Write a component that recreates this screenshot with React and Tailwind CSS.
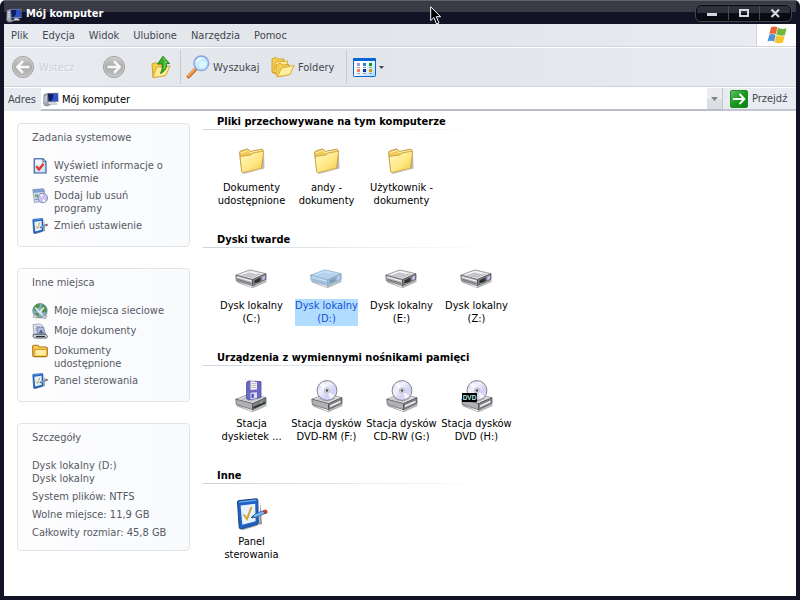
import React from "react";

const font = "font-['DejaVu_Sans_Condensed','DejaVu_Sans',sans-serif]";

/* ---------- icons ---------- */

function ComputerIcon({ className = "h-4 w-4" }) {
  return (
    <svg viewBox="0 0 16 16" className={className} aria-hidden="true">
      <path d="M1 3.5 L4.5 2.5 L5.2 3.5 V14 L2 15 L.6 13Z" fill="#a9afb9" stroke="#6b727f" strokeWidth=".6" />
      <path d="M1.6 6 L3.8 5.4 M1.6 8 L3.8 7.5 M1.6 10 L3.8 9.6" stroke="#e8eaee" strokeWidth=".8" />
      <path d="M4 2 L15.3 1.8 L15.6 11 L4.6 11.2Z" fill="#8089a0" />
      <path d="M5 2.8 L14.5 2.7 L14.8 10 L5.5 10.2Z" fill="#101d63" />
      <path d="M10 2.8 L14.5 2.7 L14.8 10 L8 10 Q11 7 10 2.8Z" fill="#2d54c8" />
      <path d="M8.5 11.2 H12 L14 13.2 L7.5 13.4Z" fill="#dfe2e8" stroke="#8d93a0" strokeWidth=".5" />
      <path d="M2 14 L6.5 12.6 L8 14 L4 15.4Z" fill="#8e96a4" />
    </svg>
  );
}

function RoundArrow({ flip = false }) {
  return (
    <svg viewBox="0 0 24 24" className="h-6 w-6" aria-hidden="true">
      <defs>
        <linearGradient id={flip ? "rgF" : "rgB"} x1="0" y1="0" x2="0" y2="1">
          <stop offset="0" stopColor="#cdcdcd" />
          <stop offset=".5" stopColor="#ababab" />
          <stop offset="1" stopColor="#c2c2c2" />
        </linearGradient>
      </defs>
      <circle cx="12" cy="12" r="10.6" fill={flip ? "url(#rgF)" : "url(#rgB)"} stroke="#9d9d9d" strokeWidth=".9" />
      <circle cx="12" cy="12" r="9.6" fill="none" stroke="#d0d0d0" strokeWidth=".7" />
      <g transform={flip ? "rotate(180 12 12)" : undefined} stroke="#f8f8f8" strokeWidth="2.5" fill="none">
        <path d="M18.5 12 H7" />
        <path d="M12 6.2 L6.3 12 L12 17.8" />
      </g>
    </svg>
  );
}

function UpIcon() {
  return (
    <svg viewBox="0 0 22 24" className="h-6 w-[22px]" aria-hidden="true">
      <path d="M2 9 L6 7.5 L8 9 L14 8 V20 L3 22.5Z" fill="#f6cf4e" stroke="#c99a1d" strokeWidth=".9" />
      <path d="M3 22.5 L6.5 12 L20 11 L15.5 20.8Z" fill="#ffeb92" stroke="#d3a226" strokeWidth=".9" />
      <path d="M13 1.3 L19.5 8.5 H16.5 Q17.2 15.5 10.5 18.5 Q12.8 14.5 12.2 9 H7.5Z" fill="#3cad29" stroke="#1d7d12" strokeWidth=".9" />
      <path d="M13 3 L16.5 7.4 H15 Q15.3 11 14 14" fill="none" stroke="#8be06f" strokeWidth=".9" />
    </svg>
  );
}

function SearchIcon() {
  return (
    <svg viewBox="0 0 24 24" className="h-6 w-6" aria-hidden="true">
      <path d="M2.5 21.5 L9.5 14.3" stroke="#c5692a" strokeWidth="3.8" strokeLinecap="round" />
      <path d="M2.3 21 L9 14" stroke="#f7a45c" strokeWidth="2" strokeLinecap="round" />
      <circle cx="15.3" cy="8.3" r="7.3" fill="#c3e9fd" stroke="#8aa6e2" strokeWidth="1.5" />
      <path d="M10 8 A5.5 5.5 0 0 1 17 3 Q13 5 10 8Z" fill="#fff" />
      <circle cx="16.5" cy="9.5" r="3.6" fill="#e4f7ff" opacity=".8" />
    </svg>
  );
}

function FoldersIcon() {
  return (
    <svg viewBox="0 0 24 22" className="h-[22px] w-6" aria-hidden="true">
      <path d="M1 3 L5 1.2 L7 3 L13 3 V14 L2.5 17.5 L1 16Z" fill="#f5cf50" stroke="#d29c22" strokeWidth=".9" />
      <path d="M2.5 17 L4.5 6 L17 5 L14 14.5Z" fill="#ffeb9a" stroke="#d29c22" strokeWidth=".8" />
      <path d="M5 9 L9 7.2 L11.5 9 L18 8.5 V18.5 L6.5 20.8 L5 19Z" fill="#f5cf50" stroke="#d29c22" strokeWidth=".9" />
      <path d="M6.5 20.8 L10.5 12 L23 9.5 L19 18.5Z" fill="#fff0a0" stroke="#d8a52b" strokeWidth=".9" />
    </svg>
  );
}

function ViewsIcon() {
  const cells = [
    [5, 5, "#a49bd6"], [11, 5, "#1686ea"], [17, 5, "#0a9c12"],
    [5, 11, "#ff7a4a"], [11, 11, "#08359a"], [17, 11, "#d19a08"],
  ];
  return (
    <svg viewBox="0 0 23 19" className="h-[19px] w-[23px]" aria-hidden="true">
      <defs>
        <linearGradient id="vw" x1="0" y1="0" x2="1" y2="1">
          <stop offset=".4" stopColor="#fff" />
          <stop offset="1" stopColor="#a9d6fb" />
        </linearGradient>
      </defs>
      <rect x=".5" y=".5" width="22" height="18" rx="1" fill="url(#vw)" stroke="#0667cf" />
      <rect x="0" y="0" width="23" height="3" rx="1" fill="#0667d2" />
      {cells.map(([x, y, c]) => (
        <g key={c}>
          <rect x={x - 1} y={y} width="3" height="3" fill={c} />
          <rect x={x - 1} y={y + 4} width="3" height="1" fill="#9aa0a8" />
        </g>
      ))}
    </svg>
  );
}

function GoIcon() {
  return (
    <svg viewBox="0 0 18 18" className="h-[18px] w-[18px]" aria-hidden="true">
      <defs>
        <linearGradient id="go" x1="0" y1="0" x2="1" y2="1">
          <stop offset="0" stopColor="#6cc06c" />
          <stop offset=".5" stopColor="#179a1d" />
          <stop offset="1" stopColor="#0a7d10" />
        </linearGradient>
      </defs>
      <rect x=".5" y=".5" width="17" height="17" rx="1.5" fill="url(#go)" stroke="#1d8a24" />
      <path d="M3 9 H14 M9.5 4 L14.5 9 L9.5 14" stroke="#fff" strokeWidth="1.8" fill="none" />
    </svg>
  );
}

function WindowsLogo() {
  return (
    <svg viewBox="0 0 20 18" className="h-[18px] w-5" aria-hidden="true">
      <path d="M4 1.3 Q7 -.3 10.4 1.3 L8.8 8.3 Q5.8 6.6 2.4 8.2Z" fill="#f0643a" />
      <path d="M10.9 1.8 Q14.5 3.8 19.6 2.2 L17.9 9.1 Q13.5 10.4 9.3 8.6Z" fill="#6fb83a" />
      <path d="M2.2 8.9 Q5.5 7.2 8.6 9 L7 15.7 Q4 14 .5 15.7Z" fill="#4f93dd" />
      <path d="M9.1 9.3 Q13.4 11.2 17.7 9.8 L15.9 16.6 Q11.8 18.1 7.5 16.3Z" fill="#f6c62c" />
    </svg>
  );
}

function FolderIcon() {
  return (
    <svg viewBox="0 0 32 32" className="h-8 w-8" aria-hidden="true">
      <defs>
        <linearGradient id="fo" x1="0" y1="0" x2="1" y2="1">
          <stop offset="0" stopColor="#fffac6" />
          <stop offset=".6" stopColor="#ffe680" />
          <stop offset="1" stopColor="#f0c443" />
        </linearGradient>
      </defs>
      <path d="M6 29 L25 25 L28 8 L28.5 24.5 L8 30Z" fill="#777" opacity=".5" />
      <path d="M3.5 8.5 Q3.5 7.5 4.5 7.2 L11 5 Q12 4.8 12.6 5.6 L14.3 7.4 L25.5 5.2 Q27 5 27 6.3 L25.5 23 L6 27.8Z" fill="#f0c958" stroke="#b98a2a" strokeWidth=".8" />
      <path d="M4.8 9 L11.8 6.4 L14 8.6 L26 6.4" stroke="#fff3b5" strokeWidth="1" fill="none" />
      <path d="M4 12.5 L14.5 11 L17 9 L27 7.2 Q27.8 7.2 27.6 8.2 L25.5 24.3 L6.7 28.5 Q5.9 28.5 5.7 27.8Z" fill="url(#fo)" stroke="#c79b38" strokeWidth=".8" />
    </svg>
  );
}

function DriveBase({ y = 0 }) {
  return (
    <g transform={`translate(0 ${y})`}>
      <path d="M1 18 L16 25 L31.5 18 L31.5 20 L17.5 26.3 L2 20.5Z" fill="#444" opacity=".4" />
      <path d="M.8 13.2 L14 8.2 Q15 7.9 16 8.2 L31 11.7 L17.5 17.5Z" fill="#ededef" stroke="#77777c" strokeWidth=".7" />
      <path d="M4 13.2 L14 9.6 L27 12.3 L17 16Z" fill="#c6c6ca" />
      <path d="M.8 13.2 L17.5 17.5 V23.8 L1.3 18.3Z" fill="#b1b1b5" stroke="#58585d" strokeWidth=".7" />
      <path d="M17.5 17.5 L31 11.7 V17.5 L17.5 23.8Z" fill="#808086" stroke="#47474d" strokeWidth=".7" />
    </g>
  );
}

function DiskIcon({ selected = false }) {
  return (
    <svg viewBox="0 0 32 32" className={selected ? "h-8 w-8 opacity-90" : "h-8 w-8"} aria-hidden="true">
      <DriveBase />
      <path d="M6 12.6 L14.5 9.8 L22 11.6" stroke="#fff" strokeWidth="1" fill="none" />
      <path d="M2 15 L16.5 19.2" stroke="#f3f3f5" strokeWidth="1.2" />
      <path d="M2.5 17.3 L16 21.6" stroke="#6c6c72" strokeWidth="1" />
      <path d="M19.5 18.3 L25.5 15.6 V19 L19.5 21.8Z" fill="#2f2f35" />
      <path d="M27.3 14.7 L30 13.5 V17 L27.3 18.3Z" fill="#c4c0f6" />
      <rect x="20" y="21" width="2" height="1" fill="#5fca5f" />
      {selected && (
        <path
          d="M.5 13.2 L14 7.8 Q15 7.5 16 7.8 L31.4 11.4 V18 L17.5 24.5 L1 18.8Z"
          fill="#9cd0fb"
          opacity=".62"
        />
      )}
    </svg>
  );
}

function FloppyDriveIcon() {
  return (
    <svg viewBox="0 0 32 32" className="h-8 w-8" aria-hidden="true">
      <DriveBase y={6} />
      <path d="M18.5 27 L30 21.7 V23.2 L18.5 28.5Z" fill="#1d1d1f" />
      <rect x="25.5" y="22" width="2" height="1.4" fill="#6fd35b" />
      <path d="M11.5 2.5 L13 1 L26 1.5 V17.5 L13.5 20 L11.5 18.5Z" fill="#6a68c4" stroke="#45439a" strokeWidth=".7" />
      <path d="M15.5 1.3 L22 1.5 V9.5 L15.5 10Z" fill="#f1f1ec" />
      <path d="M16.3 3.5 H21.3 M16.3 5.5 H21.3 M16.3 7.5 H21.3" stroke="#b7b7b7" strokeWidth=".8" />
      <path d="M15.5 12.8 L22 12.2 V18 L15.5 19.4Z" fill="#dcdcf0" />
      <path d="M16.5 14 L18.8 13.8 V17.7 L16.5 18.2Z" fill="#5250ae" />
    </svg>
  );
}

function DiscDriveIcon({ dvd = false }) {
  return (
    <svg viewBox="0 0 32 32" className="h-8 w-8" aria-hidden="true">
      <defs>
        <linearGradient id={dvd ? "dd" : "cd"} x1="0" y1="0" x2="1" y2="1">
          <stop offset="0" stopColor="#c8c4f6" />
          <stop offset=".35" stopColor="#f3f2fd" />
          <stop offset=".65" stopColor="#d2d0f6" />
          <stop offset="1" stopColor="#ecebfa" />
        </linearGradient>
      </defs>
      <DriveBase y={6} />
      <path d="M19 25.3 L29.5 20.6 V22.4 L19 27.2Z" fill="#ececee" />
      <circle cx="16" cy="10.5" r="9.9" fill={dvd ? "url(#dd)" : "url(#cd)"} stroke="#77777f" strokeWidth=".9" />
      <path d="M16 10.5 L8.5 5 A9 9 0 0 1 12.5 2.2Z M16 10.5 L23.5 16 A9 9 0 0 1 19.5 18.8Z" fill="#fff" opacity=".75" />
      <circle cx="16" cy="10.5" r="2.7" fill="#e6e6ea" stroke="#9d9dad" strokeWidth=".6" />
      <circle cx="16" cy="10.5" r="1.3" fill="#4a4a54" />
      {dvd && (
        <g>
          <rect x="1" y="13" width="15" height="9" fill="#000" />
          <text x="8.5" y="20" textAnchor="middle" fontSize="6.5" fontWeight="bold" fill="#b9eeee" fontFamily="Liberation Sans, sans-serif">
            DVD
          </text>
        </g>
      )}
    </svg>
  );
}

function PanelIcon({ className = "h-8 w-8" }) {
  return (
    <svg viewBox="0 0 32 32" className={className} aria-hidden="true">
      <path d="M4 31 L23 26.5 L24.5 4 L26 26 L7 32Z" fill="#444" opacity=".55" />
      <path d="M1.5 4 Q1.5 2.8 2.7 2.6 L20 .8 Q21.8 .7 21.8 2 L22.3 25 Q22.3 26.2 21 26.5 L5 30.8 Q3.3 31 3.2 29.5Z" fill="#1d62c4" stroke="#164488" strokeWidth="1" />
      <path d="M2.8 4.2 L20.5 2.2" stroke="#6aa8ee" strokeWidth="1.3" />
      <path d="M4.6 7.5 L19.2 5.7 L19.6 23.3 L6.3 26.8Z" fill="#e6f3ff" />
      <path d="M7.5 16.5 L11 21 L15.5 9" fill="none" stroke="#d9a32c" strokeWidth="2" />
      <path d="M15.5 19.8 L19 16 L27.5 12.7 L29.5 15.2 L20 19.3Z" fill="#7ab8f2" stroke="#2a63ae" strokeWidth=".9" />
      <path d="M27.3 12.8 L30 11.8 Q32 13 31 15 L29 15.7Z" fill="#d84432" stroke="#8c2416" strokeWidth=".6" />
      <path d="M15 20 L18 19 L16.8 17.5Z" fill="#333" />
    </svg>
  );
}

function SysInfoIcon() {
  return (
    <svg viewBox="0 0 16 16" className="h-4 w-4" aria-hidden="true">
      <path d="M2.2 .8 H11 L14 3.8 V15 H2.2Z" fill="#cfe3fb" stroke="#31568f" strokeWidth="1.1" />
      <path d="M3.2 2 H9.5 V7 H3.2Z" fill="#f0f6fe" />
      <path d="M11 .8 V3.8 H14Z" fill="#fff" stroke="#31568f" strokeWidth=".8" />
      <path d="M4.3 8.3 L7 11.5 L11.5 5.8" fill="none" stroke="#e8331f" strokeWidth="2.2" />
    </svg>
  );
}

function AddRemoveIcon() {
  return (
    <svg viewBox="0 0 16 16" className="h-4 w-4" aria-hidden="true">
      <path d="M.8 1.5 L11.5 .8 L12.5 3 V13 L2.5 14.5Z" fill="#d5dfed" stroke="#8391ad" strokeWidth=".8" />
      <path d="M.8 1.5 L11.5 .8 L12 4 L1.3 5Z" fill="#7f9bd2" />
      <rect x="3" y="6.3" width="3" height="3" fill="#6fb55f" />
      <path d="M3 11.5 H7 M7.5 7.5 H10" stroke="#7d8aa8" strokeWidth=".9" />
      <circle cx="10.8" cy="10" r="4.7" fill="#cdc8f3" stroke="#7c79b0" strokeWidth=".9" />
      <path d="M10.8 10 L8 7 A4 4 0 0 1 10.5 6Z M10.8 10 L13.5 13 A4 4 0 0 1 11 14Z" fill="#fff" />
      <circle cx="10.8" cy="10" r="1.2" fill="#fff" stroke="#7c79b0" strokeWidth=".5" />
    </svg>
  );
}

function NetworkIcon() {
  return (
    <svg viewBox="0 0 16 16" className="h-4 w-4" aria-hidden="true">
      <circle cx="8" cy="7.7" r="7.2" fill="#86aec4" stroke="#587f8a" strokeWidth=".8" />
      <path d="M2 4 Q5 0 8 1.2 Q8 4 5.5 5 Q5 8 3 8 Q1.5 7 2 4Z M10 1.5 Q15 3.5 14.8 8 Q12.5 11 10.5 8.5 Q9 5 10 1.5Z M3 10 Q6 9 7 12 L6.5 14 Q3.5 13 3 10Z" fill="#4a933c" />
      <path d="M3 4.5 L12 13.5 M7 10 L12 4.5" stroke="#e9eef1" strokeWidth="1.6" />
      <path d="M11.5 11.5 L15 13 L13.5 15.5 L9.5 14.7Z" fill="#c6ccd4" stroke="#626b77" strokeWidth=".5" />
      <path d="M2 11.5 L6 13 L4.5 15.3 L1 14Z" fill="#cdd3da" stroke="#7c8590" strokeWidth=".5" />
    </svg>
  );
}

function DocsIcon() {
  return (
    <svg viewBox="0 0 16 16" className="h-4 w-4" aria-hidden="true">
      <path d="M1 1.5 L8.5 1 L10.5 3 V11 H2Z" fill="#e6e8f3" stroke="#8d93ae" strokeWidth=".8" />
      <path d="M3 3.5 H8 M3 5.5 H8 M3 7.5 H6" stroke="#99a0bd" strokeWidth=".8" />
      <path d="M5 4.5 L11.5 4 L13.5 11.5 H5.5Z" fill="#aeb9dc" stroke="#65709a" strokeWidth=".7" />
      <path d="M6.5 10.3 L9 6.5 L12 10.5Z" fill="#52608c" />
      <path d="M1.5 11.3 H14 L15.5 13.5 L14.5 15 H2.5 L.8 13.2Z" fill="#d3d5dd" stroke="#4a4e5e" strokeWidth=".9" />
      <path d="M4 13.5 H13" stroke="#2b2f3f" strokeWidth="1.2" />
    </svg>
  );
}

function SmallFolderIcon() {
  return (
    <svg viewBox="0 0 16 16" className="h-4 w-4" aria-hidden="true">
      <path d="M.7 3.5 Q.7 2.2 2 2.2 H5.5 L7.2 4 H14 Q15.3 4 15.3 5.3 V12 Q15.3 13.6 13.8 13.6 H2.2 Q.7 13.6 .7 12Z" fill="#f7cd55" stroke="#ad7410" strokeWidth="1.1" />
      <path d="M3.2 6.8 H13.8 V12.3 H2.5Z" fill="#ffefa0" />
      <path d="M2.8 12.5 V6.5 H14.2" stroke="#c48a1b" strokeWidth=".8" fill="none" />
    </svg>
  );
}

/* ---------- pieces ---------- */

function TitleBar() {
  const buttons = [
    ["Minimalizuj", <path key="m" d="M10 8.5 H20" stroke="#d5d6de" strokeWidth="3" />],
    ["Maksymalizuj", <rect key="x" x="11" y="4" width="8" height="6" fill="none" stroke="#d5d6de" strokeWidth="2" />],
    ["Zamknij", <path key="c" d="M11.5 3.5 L19 11 M19 3.5 L11.5 11" stroke="#d5d6de" strokeWidth="2.2" />],
  ];
  return (
    <header className="flex h-6 shrink-0 items-center border-t border-[#60616c] bg-[linear-gradient(#3b3b47_0_11px,#121325_11px)] pl-[2px] pr-[5px]">
      <ComputerIcon className="mr-1 mt-1 h-4 w-4" />
      <h1 className="mt-[3px] flex-1 text-[11px] font-bold leading-4 text-white">Mój komputer</h1>
      <div className="flex h-4 overflow-hidden rounded-[5px] border border-[#05050c] bg-[linear-gradient(#30303c_0_7px,#0b0b16_7px)] outline outline-[#44454f]">
        {buttons.map(([label, glyph], i) => (
          <button key={label} aria-label={label} className={i ? "w-[31px] border-l border-[#4a4b56]" : "w-[31px]"}>
            <svg viewBox="0 0 30 14" className="h-[14px] w-[30px]">{glyph}</svg>
          </button>
        ))}
      </div>
    </header>
  );
}

function Bars() {
  const menu = ["Plik", "Edycja", "Widok", "Ulubione", "Narzędzia", "Pomoc"];
  return (
    <div className="shrink-0 bg-[linear-gradient(90deg,#e8ebf0,#e2e5ea_35%,#e3e6eb_60%,#e9ecf1)] text-[#43474f]">
      <div className="flex h-[23px] items-stretch border-b border-[#d0d3da]">
        <nav className="flex flex-1 items-center gap-[14px] pl-[7px]">
          {menu.map((m) => (
            <button key={m}>{m}</button>
          ))}
        </nav>
        <div className="flex w-10 items-center justify-center border-l border-[#d0d3da] bg-white">
          <WindowsLogo />
        </div>
      </div>
      <div className="flex h-10 items-center border-y border-t-white border-b-[#cfd2d9] pl-[7px]">
        <button disabled className="flex w-[91px] items-center gap-1 text-[#cdd1d7] [text-shadow:1px_1px_0_#f4f6f8]">
          <RoundArrow />
          Wstecz
        </button>
        <button disabled aria-label="Dalej" className="w-12">
          <RoundArrow flip />
        </button>
        <button aria-label="Do góry" className="w-[30px]">
          <UpIcon />
        </button>
        <div className="h-[34px] w-[6px] border-l border-[#c8cbd1]" />
        <button className="flex w-[85px] items-center gap-[3px]">
          <SearchIcon />
          Wyszukaj
        </button>
        <button className="flex w-[75px] items-center gap-[3px]">
          <FoldersIcon />
          Foldery
        </button>
        <div className="h-[34px] w-[7px] border-l border-[#c8cbd1]" />
        <button aria-label="Widoki" className="flex items-center gap-[3px]">
          <ViewsIcon />
          <svg viewBox="0 0 5 3" className="h-[3px] w-[5px]"><path d="M0 0 H5 L2.5 3Z" fill="#43474f" /></svg>
        </button>
      </div>
      <form className="flex h-6 items-stretch border-t border-t-white" onSubmit={(e) => e.preventDefault()}>
        <label htmlFor="address" className="flex w-[37px] items-center pl-1">Adres</label>
        <div className="flex flex-1 items-center border-b-2 border-[#b9bdc8] bg-white pl-[2px]">
          <ComputerIcon />
          <input id="address" defaultValue="Mój komputer" className="ml-[3px] mt-[2px] min-w-0 flex-1 text-black outline-none" />
          <button type="button" aria-label="Rozwiń adresy" className="flex h-full w-4 items-center justify-center border-r border-[#c2c5cd] bg-[linear-gradient(#eaecf0_50%,#dcdee3_50%)]">
            <svg viewBox="0 0 7 4" className="h-1 w-[7px]"><path d="M0 0 H7 L3.5 4Z" fill="#82858c" /></svg>
          </button>
        </div>
        <button className="flex w-[73px] items-center gap-1 border-b-2 border-[#c3c6cf] pl-[7px]">
          <GoIcon />
          Przejdź
        </button>
      </form>
    </div>
  );
}

function Card({ title, children }) {
  return (
    <section className="rounded-[4px] border border-[#e2e4e8] bg-[linear-gradient(90deg,#fdfdfe,#f8fafc)] px-[14px] pt-[6px] text-[#565a64]">
      <h2 className="leading-[15px]">{title}</h2>
      {children}
    </section>
  );
}

function Task({ icon, children }) {
  return (
    <li>
      <a href="#" className="flex gap-[6px]">
        {icon}
        <span className="-mb-px mt-px flex-1">{children}</span>
      </a>
    </li>
  );
}

function Item({ icon, name, detail, selected }) {
  return (
    <li className="flex w-[75px] justify-center">
      <button className="flex flex-col items-center gap-[5px] whitespace-nowrap leading-[13px]">
        {icon}
        <span className={selected ? "bg-[#b0dcff] pb-px text-[#1450d8]" : "pb-px"}>
          {name}
          <br />
          {detail}
        </span>
      </button>
    </li>
  );
}

function Group({ title, items, tint }) {
  return (
    <section className="h-[118px]">
      <h2 className="h-[15px] pl-[14px] font-bold leading-4">{title}</h2>
      <div className={tint ? "h-px w-[290px] bg-[linear-gradient(90deg,#cdd5e2,#fff)]" : "h-px w-[290px] bg-[linear-gradient(90deg,#d0d0d0,#fff)]"} />
      <ul className="flex pl-[11px] pt-[14px]">
        {items.map((it) => (
          <Item key={it.name + it.detail} {...it} />
        ))}
      </ul>
    </section>
  );
}

const groups = [
  {
    title: "Pliki przechowywane na tym komputerze",
    items: [
      { icon: <FolderIcon />, name: "Dokumenty", detail: "udostępnione" },
      { icon: <FolderIcon />, name: "andy -", detail: "dokumenty" },
      { icon: <FolderIcon />, name: "Użytkownik -", detail: "dokumenty" },
    ],
  },
  {
    title: "Dyski twarde",
    tint: true,
    items: [
      { icon: <DiskIcon />, name: "Dysk lokalny", detail: "(C:)" },
      { icon: <DiskIcon selected />, name: "Dysk lokalny", detail: "(D:)", selected: true },
      { icon: <DiskIcon />, name: "Dysk lokalny", detail: "(E:)" },
      { icon: <DiskIcon />, name: "Dysk lokalny", detail: "(Z:)" },
    ],
  },
  {
    title: "Urządzenia z wymiennymi nośnikami pamięci",
    tint: true,
    items: [
      { icon: <FloppyDriveIcon />, name: "Stacja", detail: "dyskietek ..." },
      { icon: <DiscDriveIcon />, name: "Stacja dysków", detail: "DVD-RM (F:)" },
      { icon: <DiscDriveIcon />, name: "Stacja dysków", detail: "CD-RW (G:)" },
      { icon: <DiscDriveIcon dvd />, name: "Stacja dysków", detail: "DVD (H:)" },
    ],
  },
  {
    title: "Inne",
    items: [{ icon: <PanelIcon />, name: "Panel", detail: "sterowania" }],
  },
];

export default function App() {
  return (
    <div className={`${font} relative flex min-h-screen flex-col rounded-t-[6px] border-x-4 border-b-4 border-[#121325] bg-[#121325] text-[11px] leading-[13px]`}>
      <TitleBar />
      <Bars />
      <div className="flex flex-1 bg-white">
        <aside className="flex w-[199px] shrink-0 flex-col gap-[21px] pl-[13px] pr-[13px] pt-3">
          <Card title="Zadania systemowe">
            <ul className="flex flex-col gap-1 pb-3 pt-[13px]">
              <Task icon={<SysInfoIcon />}>Wyświetl informacje o<br />systemie</Task>
              <Task icon={<AddRemoveIcon />}>Dodaj lub usuń<br />programy</Task>
              <Task icon={<PanelIcon className="h-4 w-4" />}>Zmień ustawienie</Task>
            </ul>
          </Card>
          <Card title="Inne miejsca">
            <ul className="flex flex-col gap-1 pb-3 pt-[13px]">
              <Task icon={<NetworkIcon />}>Moje miejsca sieciowe</Task>
              <Task icon={<DocsIcon />}>Moje dokumenty</Task>
              <Task icon={<SmallFolderIcon />}>Dokumenty<br />udostępnione</Task>
              <Task icon={<PanelIcon className="h-4 w-4" />}>Panel sterowania</Task>
            </ul>
          </Card>
          <Card title="Szczegóły">
            <div className="flex flex-col gap-[5px] pb-[11px] pt-[14px]">
              <p>Dysk lokalny (D:)<br />Dysk lokalny</p>
              <p>System plików: NTFS</p>
              <p>Wolne miejsce: 11,9 GB</p>
              <p>Całkowity rozmiar: 45,8 GB</p>
            </div>
          </Card>
        </aside>
        <main className="min-w-0 flex-1 pt-[3px] text-black">
          {groups.map((g) => (
            <Group key={g.title} {...g} />
          ))}
        </main>
      </div>
      <svg viewBox="0 0 12 19" className="absolute left-[426px] top-[6px] h-[19px] w-3" aria-hidden="true">
        <path d="M.7 .8 V14.5 L3.9 11.6 L6.6 18 L9 17 L6.3 10.7 H10.6Z" fill="#000" stroke="#fff" strokeWidth="1" />
      </svg>
    </div>
  );
}
